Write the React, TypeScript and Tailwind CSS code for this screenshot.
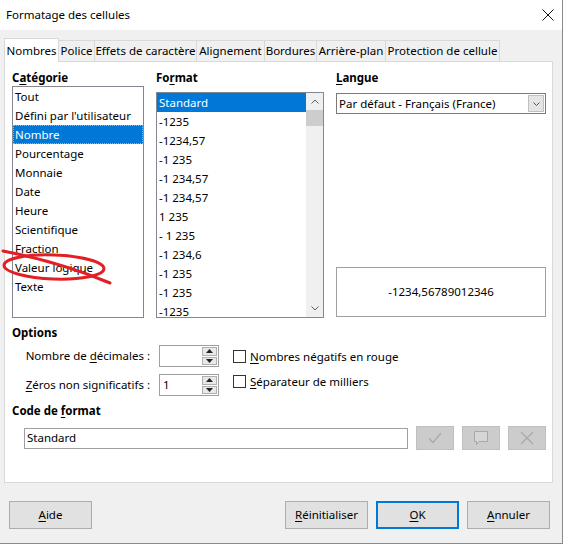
import React from 'react';

const font = { fontFamily: '"Noto Sans", "Liberation Sans", sans-serif' };

const categories = [
  'Tout',
  "Défini par l'utilisateur",
  'Nombre',
  'Pourcentage',
  'Monnaie',
  'Date',
  'Heure',
  'Scientifique',
  'Fraction',
  'Valeur logique',
  'Texte',
];

const formats = [
  'Standard',
  '-1235',
  '-1234,57',
  '-1 235',
  '-1 234,57',
  '-1 234,57',
  '1 235',
  '- 1 235',
  '-1 234,6',
  '-1 235',
  '-1 235',
  '-1235',
];

const tabs = [
  { label: 'Police', w: 'w-[36px]' },
  { label: 'Effets de caractère', w: 'w-[102px]' },
  { label: 'Alignement', w: 'w-[68px]' },
  { label: 'Bordures', w: 'w-[52px]' },
  { label: 'Arrière-plan', w: 'w-[69px]' },
  { label: 'Protection de cellule', w: 'w-[114px]' },
];

// label with one underlined mnemonic letter
const Mn = ({ pre = '', u, post = '' }: { pre?: string; u: string; post?: string }) => (
  <>
    {pre}
    <span className="underline underline-offset-2">{u}</span>
    {post}
  </>
);

const Spinner = ({ value }: { value: string }) => (
  <div className="w-[60px] h-[22px] border border-[#a0a0a0] bg-white flex items-center">
    <span className="flex-1 pl-[3px] leading-none">{value}</span>
    <div className="w-[15px] h-[18px] mr-[1px] flex flex-col gap-px">
      <div className="flex-1 bg-[#e8e8e8] border border-[#b0b0b0] flex items-center justify-center">
        <svg width="7" height="4" viewBox="0 0 7 4"><path d="M3.5 0 L7 4 L0 4 Z" fill="#222" /></svg>
      </div>
      <div className="flex-1 bg-[#e8e8e8] border border-[#b0b0b0] flex items-center justify-center">
        <svg width="7" height="4" viewBox="0 0 7 4"><path d="M0 0 L7 0 L3.5 4 Z" fill="#222" /></svg>
      </div>
    </div>
  </div>
);

const Checkbox = () => <div className="w-[13px] h-[13px] border border-[#333] bg-white shrink-0" />;

const GrayBtn = ({ children }: { children: React.ReactNode }) => (
  <div className="w-[38px] h-[24px] bg-[#cccccc] border border-[#bfbfbf] flex items-center justify-center">
    {children}
  </div>
);

const DlgBtn = ({ children, primary }: { children: React.ReactNode; primary?: boolean }) => (
  <div
    className={
      primary
        ? 'w-[83px] h-[28px] bg-[#e1e1e1] border-2 border-[#0078d7] flex items-center justify-center'
        : 'w-[83px] h-[28px] bg-[#e1e1e1] border border-[#adadad] flex items-center justify-center'
    }
  >
    {children}
  </div>
);

export default function App() {
  return (
    <div className="relative w-[567px] h-[545px] bg-white text-[11.5px] text-black overflow-hidden" style={font}>
      <div className="w-[563px] h-[544px] border-r border-b border-[#8a8a8a] flex flex-col">
        {/* title bar */}
        <div className="h-[30px] bg-white flex items-center justify-between pl-[6px] pr-[8px]">
          <span>Formatage des cellules</span>
          <svg width="12" height="12" viewBox="0 0 12 12">
            <path d="M0.5 0.5 L11.5 11.5 M11.5 0.5 L0.5 11.5" stroke="#111" strokeWidth="1" />
          </svg>
        </div>

        <div className="flex-1 bg-[#f0f0f0] flex flex-col pt-[8px] pl-[4px] pr-[9px]">
          {/* tabs */}
          <div className="h-[23px] flex items-end">
            <div className="w-[55px] h-[24px] -mb-px relative z-10 bg-white border border-b-0 border-[#d9d9d9] flex items-center justify-center">
              Nombres
            </div>
            {tabs.map((t) => (
              <div
                key={t.label}
                className={`${t.w} h-[21px] border-t border-r border-[#d9d9d9] flex items-center justify-center whitespace-nowrap`}
              >
                {t.label}
              </div>
            ))}
          </div>

          {/* page */}
          <div className="h-[422px] bg-white border border-[#d9d9d9] pl-[7px] pt-[8px] flex flex-col">
            <div className="flex">
              <div className="w-[132px] flex flex-col">
                <div className="h-[16px] leading-[16px] font-bold">
                  <Mn pre="C" u="a" post="tégorie" />
                </div>
                <div className="h-[232px] border border-[#828790]">
                  {categories.map((c) => (
                    <div
                      key={c}
                      className={
                        c === 'Nombre'
                          ? 'h-[19px] leading-[19px] pl-[2px] bg-[#0078d7] text-white outline outline-1 outline-dotted outline-[#f0a040] -outline-offset-1'
                          : 'h-[19px] leading-[19px] pl-[2px]'
                      }
                    >
                      {c}
                    </div>
                  ))}
                </div>
              </div>

              <div className="w-[168px] ml-[12px] flex flex-col">
                <div className="h-[16px] leading-[16px] font-bold">
                  <Mn pre="Fo" u="r" post="mat" />
                </div>
                <div className="h-[226px] mt-[6px] border border-[#828790] flex overflow-hidden">
                  <div className="flex-1">
                    {formats.map((f, i) => (
                      <div
                        key={i}
                        className={
                          i === 0
                            ? 'h-[19px] leading-[19px] pl-[2px] bg-[#0078d7] text-white'
                            : 'h-[19px] leading-[19px] pl-[2px]'
                        }
                      >
                        {f}
                      </div>
                    ))}
                  </div>
                  <div className="w-[17px] bg-[#f0f0f0] flex flex-col">
                    <div className="h-[17px] flex items-center justify-center">
                      <svg width="8" height="5" viewBox="0 0 8 5"><path d="M0.5 4.5 L4 1 L7.5 4.5" stroke="#606060" fill="none" /></svg>
                    </div>
                    <div className="h-[16px] bg-[#cdcdcd]" />
                    <div className="flex-1" />
                    <div className="h-[17px] flex items-center justify-center">
                      <svg width="8" height="5" viewBox="0 0 8 5"><path d="M0.5 0.5 L4 4 L7.5 0.5" stroke="#606060" fill="none" /></svg>
                    </div>
                  </div>
                </div>
              </div>

              <div className="w-[210px] ml-[12px] flex flex-col">
                <div className="h-[16px] leading-[16px] font-bold">
                  <Mn u="L" post="angue" />
                </div>
                <div className="h-[21px] mt-[7px] border border-[#7a7a7a] flex items-center">
                  <span className="flex-1 pl-[2px]">Par défaut - Français (France)</span>
                  <div className="w-[16px] h-[17px] mr-px bg-[#e5e5e5] border border-[#c0c0c0] flex items-center justify-center">
                    <svg width="7" height="4" viewBox="0 0 7 4"><path d="M0.5 0.5 L3.5 3.5 L6.5 0.5" stroke="#555" fill="none" /></svg>
                  </div>
                </div>
                <div className="flex-1" />
                <div className="h-[50px] mb-[1px] border border-[#a0a0a0] flex items-center justify-center">
                  -1234,56789012346
                </div>
              </div>
            </div>

            {/* options */}
            <div className="mt-[7px] h-[16px] leading-[16px] font-bold">Options</div>
            <div className="flex mt-[4px]">
              <div className="flex flex-col gap-[7px]">
                <div className="flex items-center">
                  <span className="w-[141px] text-right pr-[3px]">
                    <Mn pre="Nombre de " u="d" post="écimales :" />
                  </span>
                  <div className="ml-[6px]"><Spinner value="" /></div>
                </div>
                <div className="flex items-center">
                  <span className="w-[141px] text-right pr-[3px]">
                    <Mn u="Z" post="éros non significatifs :" />
                  </span>
                  <div className="ml-[6px]"><Spinner value="1" /></div>
                </div>
              </div>
              <div className="ml-[14px] flex flex-col">
                <div className="mt-[5px] h-[13px] flex items-center gap-[4px]">
                  <Checkbox />
                  <span className="leading-none">
                    <Mn u="N" post="ombres négatifs en rouge" />
                  </span>
                </div>
                <div className="mt-[12px] h-[13px] flex items-center gap-[4px]">
                  <Checkbox />
                  <span className="leading-none">
                    <Mn u="S" post="éparateur de milliers" />
                  </span>
                </div>
              </div>
            </div>

            {/* format code */}
            <div className="mt-[7px] h-[16px] leading-[16px] font-bold">
              <Mn pre="Code de " u="f" post="ormat" />
            </div>
            <div className="mt-[7px] flex items-center">
              <div className="ml-[12px] w-[384px] h-[21px] border border-[#a0a0a0] flex items-center pl-[2px]">
                Standard
              </div>
              <div className="ml-[8px] flex gap-[8px]">
                <GrayBtn>
                  <svg width="14" height="12" viewBox="0 0 14 12"><path d="M1 6.5 L5 10.5 L13 1" stroke="#a8a8a8" strokeWidth="1.2" fill="none" /></svg>
                </GrayBtn>
                <GrayBtn>
                  <svg width="16" height="16" viewBox="0 0 16 16"><path d="M1.5 1.5 H14.5 V11.5 H6 L3.5 14.5 V11.5 H1.5 Z" stroke="#a8a8a8" strokeWidth="1" fill="#d6d6d6" /></svg>
                </GrayBtn>
                <GrayBtn>
                  <svg width="14" height="14" viewBox="0 0 14 14"><path d="M1 1 L13 13 M13 1 L1 13" stroke="#a8a8a8" strokeWidth="1.2" /></svg>
                </GrayBtn>
              </div>
            </div>
          </div>

          {/* dialog buttons */}
          <div className="mt-[18px] flex justify-between pl-[5px] pr-[3px]">
            <DlgBtn><Mn u="A" post="ide" /></DlgBtn>
            <div className="flex gap-[8px]">
              <DlgBtn><Mn u="R" post="éinitialiser" /></DlgBtn>
              <DlgBtn primary><Mn u="O" post="K" /></DlgBtn>
              <DlgBtn><Mn u="A" post="nnuler" /></DlgBtn>
            </div>
          </div>
        </div>
      </div>

      {/* red hand-drawn annotation */}
      <svg className="absolute left-0 top-0 pointer-events-none" width="567" height="545" viewBox="0 0 567 545">
        <ellipse cx="54" cy="267" rx="50" ry="12" transform="rotate(2 54 267)" stroke="#e31e24" strokeWidth="3" fill="none" />
        <path d="M3 251 Q 60 262 110 283" stroke="#e31e24" strokeWidth="3" fill="none" strokeLinecap="round" />
      </svg>
    </div>
  );
}
